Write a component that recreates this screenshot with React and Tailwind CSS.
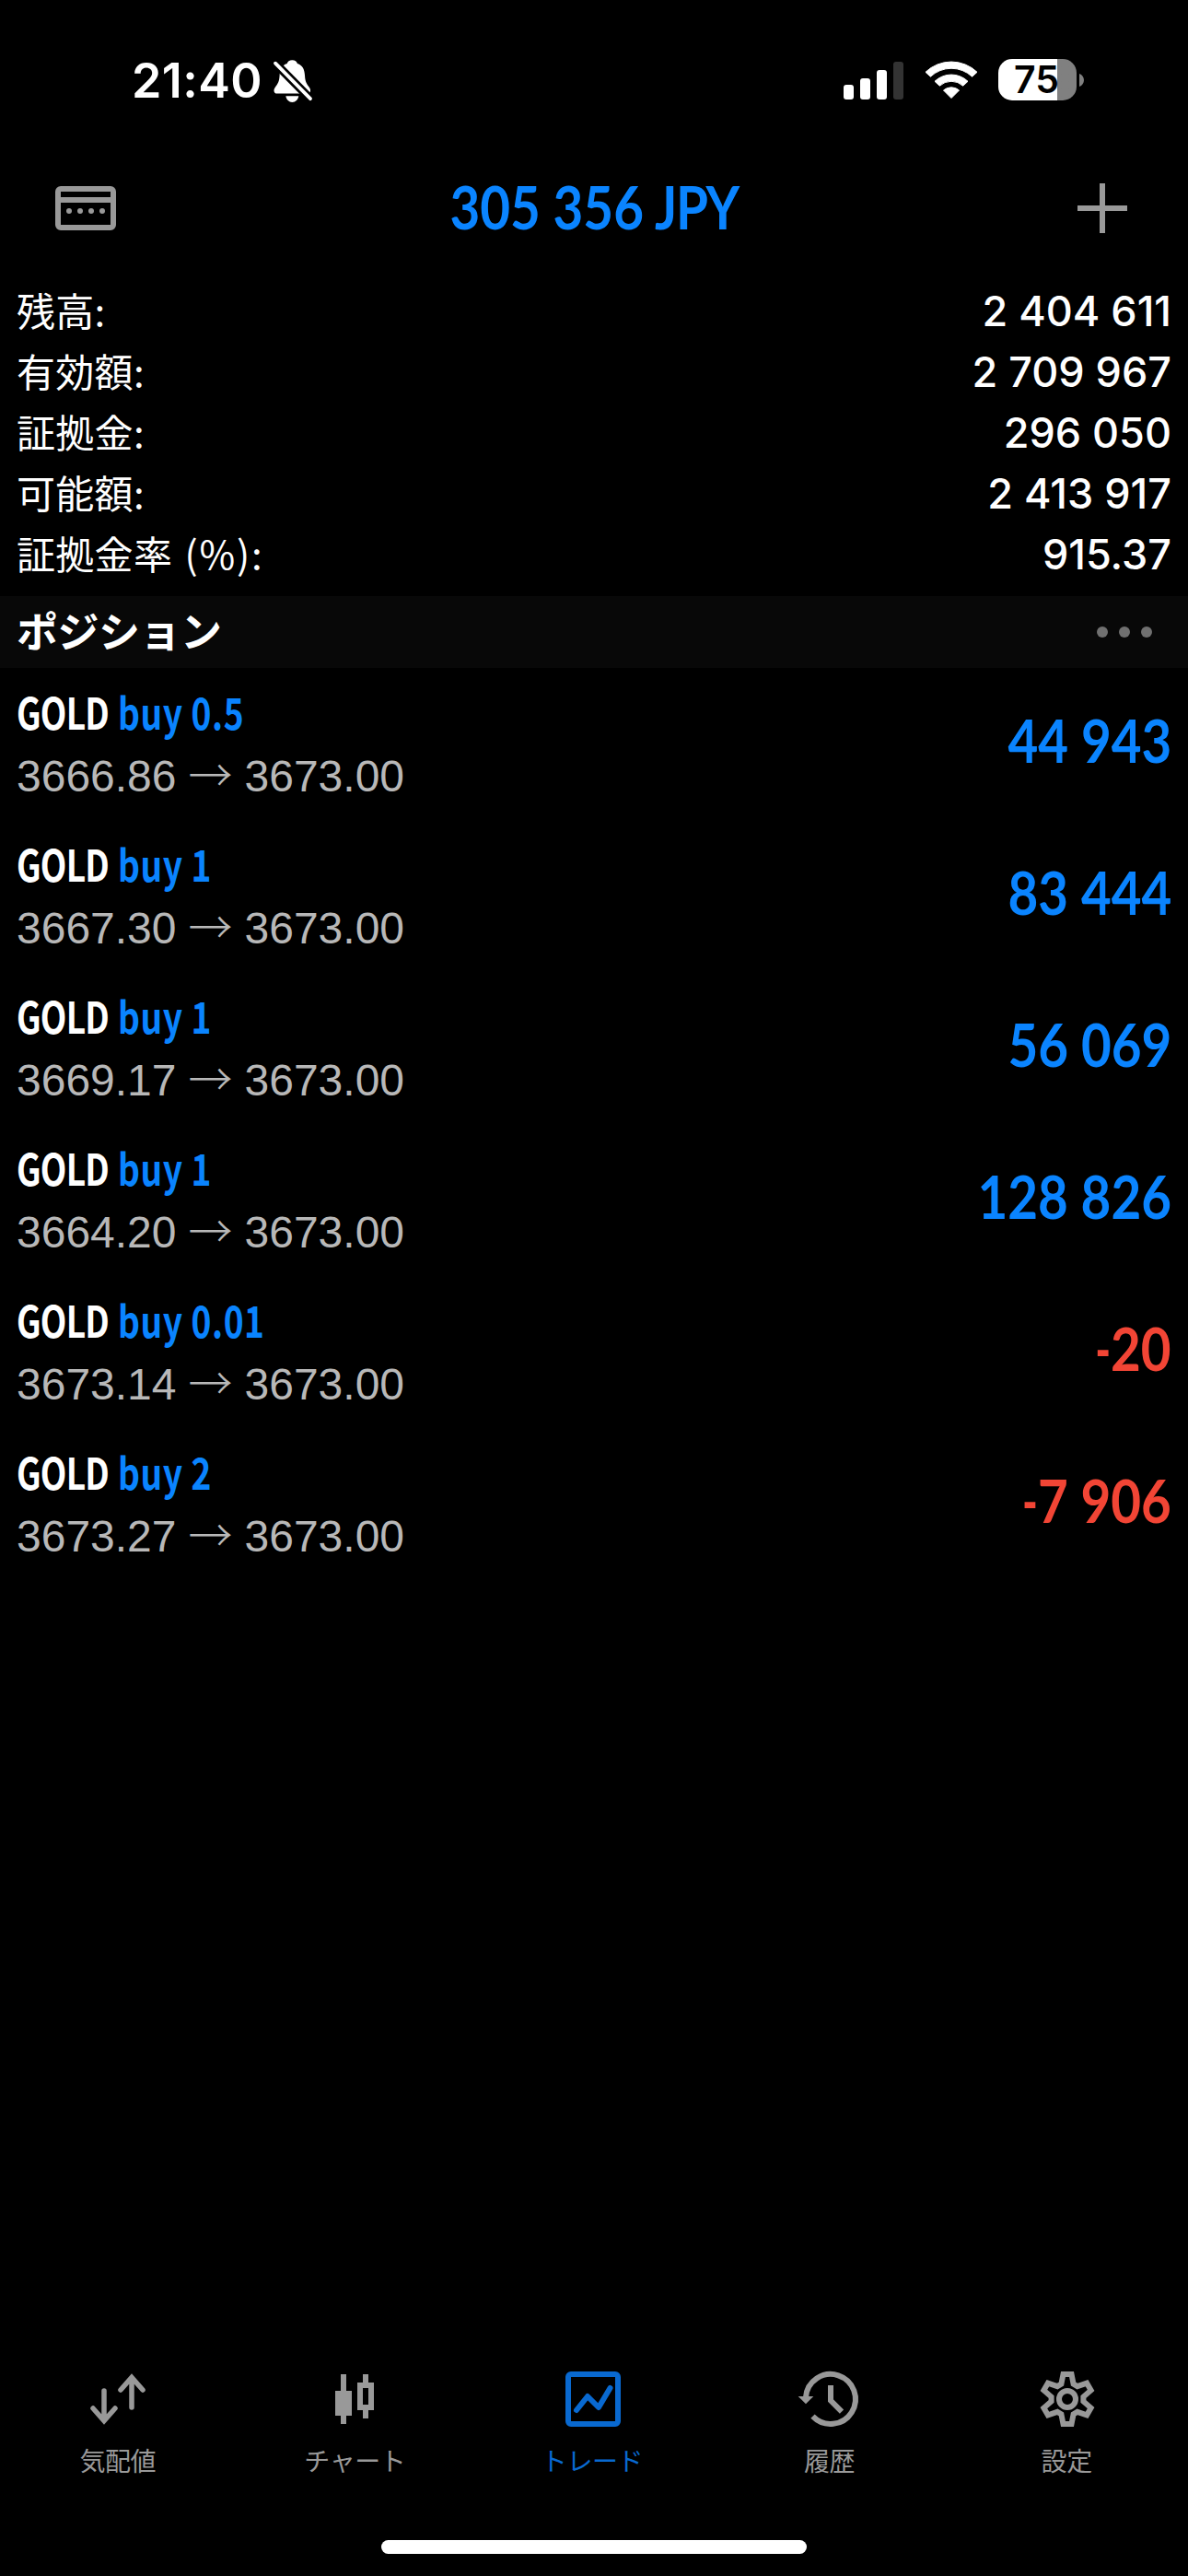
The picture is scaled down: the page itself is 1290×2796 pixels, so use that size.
import React from 'react';
import clsx from 'clsx';

const summary = [
  { label: '残高:', value: '2 404 611' },
  { label: '有効額:', value: '2 709 967' },
  { label: '証拠金:', value: '296 050' },
  { label: '可能額:', value: '2 413 917' },
  { label: '証拠金率', suffix: ' (%):', value: '915.37' },
];

const positions = [
  { id: 1, volume: '0.5', open: '3666.86', current: '3673.00', profit: '44 943' },
  { id: 2, volume: '1', open: '3667.30', current: '3673.00', profit: '83 444' },
  { id: 3, volume: '1', open: '3669.17', current: '3673.00', profit: '56 069' },
  { id: 4, volume: '1', open: '3664.20', current: '3673.00', profit: '128 826' },
  { id: 5, volume: '0.01', open: '3673.14', current: '3673.00', profit: '-20' },
  { id: 6, volume: '2', open: '3673.27', current: '3673.00', profit: '-7 906' },
];

const BellOffIcon = () => (
  <svg className="ml-[11px] h-[48px] w-[44px]" viewBox="0 0 44 48" fill="none">
    <path
      d="M21.300 1.300c-3 0-5 1.600-5.600 3.700C9.800 6.900 7.900 11.800 7.600 17.800 7.300 24.300 5.800 26.800 2.800 30.800 0.500 33.900 1.300 37.600 4.800 37.600H37.800C41.300 37.600 42.100 33.900 39.800 30.800 36.800 26.800 35.300 24.300 35 17.800 34.700 11.800 32.800 6.900 26.900 5 26.300 2.900 24.300 1.300 21.300 1.300Z"
      fill="white"
    />
    <path d="M14.300 40.300H28.300C27.800 44 24.800 47 21.300 47S14.800 44 14.300 40.300Z" fill="white" />
    <path d="M-1 0.600L44 46.200" stroke="black" strokeWidth="9.200" />
    <path d="M3 4.700L41 43.200" stroke="white" strokeWidth="3.800" strokeLinecap="round" />
  </svg>
);

const SignalIcon = () => (
  <svg className="h-[42px] w-[66px]" viewBox="0 0 66 42">
    <rect x="0" y="26" width="11" height="16" rx="3" fill="white" />
    <rect x="18" y="19" width="11" height="23" rx="3" fill="white" />
    <rect x="36" y="10" width="11" height="32" rx="3" fill="white" />
    <rect x="54" y="1" width="11" height="41" rx="3" fill="#333333" />
  </svg>
);

const WifiIcon = () => (
  <svg className="ml-[22px] h-[43px] w-[58px]" viewBox="0 0 58 43">
    <g fill="white" stroke="white" strokeWidth="1" strokeLinejoin="round">
      <path d="M1 13.300A40.500 40.500 0 0 1 57 13.300L51.600 18.200A33 33 0 0 0 6.400 18.200Z" />
      <path d="M11 23.300A26 26 0 0 1 47 23.300L41.700 28.200A18.800 18.800 0 0 0 16.300 28.200Z" />
      <path d="M20.500 33A13 13 0 0 1 37.500 33L29 41.500Z" />
    </g>
  </svg>
);

const Battery = () => (
  <div className="ml-[22px] flex items-center">
    <div className="flex h-[45px] w-[85px] items-center justify-center rounded-[15px] bg-linear-to-r from-white from-[75.300%] to-[#808080] to-[75.300%]">
      <span className="mr-0.5 text-[41px] leading-[45px] font-semibold text-black">75</span>
    </div>
    <svg className="ml-[3px] h-[14px] w-[5px]" viewBox="0 0 5 14">
      <path d="M0 0C3 1 5 4 5 7S3 13 0 14Z" fill="#808080" />
    </svg>
  </div>
);

const CardIcon = () => (
  <svg className="h-[48px] w-[66px]" viewBox="0 0 66 48" fill="none" stroke="#999999" strokeWidth="6">
    <rect x="3" y="3" width="60" height="42" rx="3" />
    <path d="M3 15H63" />
    <g fill="#999999" stroke="none">
      <circle cx="15" cy="27" r="3" />
      <circle cx="27" cy="27" r="3" />
      <circle cx="39" cy="27" r="3" />
      <circle cx="51" cy="27" r="3" />
    </g>
  </svg>
);

const PlusIcon = () => (
  <svg className="h-[54px] w-[54px]" viewBox="0 0 54 54" stroke="#999999" strokeWidth="6">
    <path d="M27 0V54M0 27H54" />
  </svg>
);

const MoreIcon = () => (
  <svg className="h-3 w-[60px]" viewBox="0 0 60 12" fill="#707070">
    <circle cx="6" cy="6" r="6" />
    <circle cx="30" cy="6" r="6" />
    <circle cx="54" cy="6" r="6" />
  </svg>
);

// Tab icons share a 72px box centred on the origin
const TabIcon = ({ children }) => (
  <svg
    className="h-[72px] w-[72px]"
    viewBox="-36 -36 72 72"
    fill="none"
    stroke="currentColor"
    strokeWidth="6"
  >
    {children}
  </svg>
);

const tabs = [
  {
    label: '気配値',
    icon: (
      <g strokeWidth="5.500" strokeLinecap="round">
        <path d="M-16 -9V22M-28 10L-16 23.500L-4 10" />
        <path d="M14 9V-22M2 -10L14 -23.500L26 -10" />
      </g>
    ),
  },
  {
    label: 'チャート',
    icon: (
      <g fill="currentColor" stroke="none">
        <path d="M-16 -27H-10V27H-16Z" />
        <path d="M-22 -9H-4V18H-22Z" />
        <path d="M8 -27H14V-18H20V12H14V21H8V12H2V-18H8ZM8 -12V6H14V-12Z" fillRule="evenodd" />
      </g>
    ),
  },
  {
    label: 'トレード',
    active: true,
    icon: (
      <>
        <rect x="-27" y="-27" width="54" height="54" rx="3" />
        <path d="M-18 12L-6 -3L6 9L18.500 -12" strokeLinecap="round" strokeLinejoin="round" />
      </>
    ),
  },
  {
    label: '履歴',
    icon: (
      <>
        <path d="M-27 -2A27 27 0 1 1 -19.500 18.700" />
        <path d="M-35.300 -3H-18.700L-27 5.300Z" fill="currentColor" stroke="none" />
        <path d="M0 -15V1.500L12 13.700" />
      </>
    ),
  },
  {
    label: '設定',
    icon: (
      <>
        <path d="M-4.500 -27H4.500L6.600 -16.300L10.800 -13.900L21.100 -17.400L25.600 -9.600L17.400 -2.450V2.450L25.600 9.600L21.100 17.400L10.800 13.900L6.600 16.300L4.500 27H-4.500L-6.600 16.300L-10.800 13.900L-21.100 17.400L-25.600 9.600L-17.400 2.450V-2.450L-25.600 -9.600L-21.100 -17.400L-10.800 -13.900L-6.600 -16.300Z" />
        <circle r="9" />
      </>
    ),
  },
];

const StatusBar = () => (
  <div className="flex h-[174px] items-start justify-between pr-[113px] pl-[143px] font-['Inter',sans-serif]">
    <div className="flex h-[176px] items-center">
      <span className="text-[52px] leading-none font-semibold tracking-[0.4px] text-white">21:40</span>
      <BellOffIcon />
    </div>
    <div className="flex h-[173px] items-center">
      <SignalIcon />
      <WifiIcon />
      <Battery />
    </div>
  </div>
);

const Header = ({ total, currency }) => (
  <header className="flex h-[104px] items-center justify-between pr-[66px] pl-[60px]">
    <CardIcon />
    <h1 className="mr-[6px] scale-x-[0.87] pb-1 font-['Lato',sans-serif] text-[65px] leading-none font-bold whitespace-nowrap text-[#0a84ff]">
      {total} <span className="-ml-0.5 tracking-[-1.500px]">{currency}</span>
    </h1>
    <PlusIcon />
  </header>
);

const SummaryRow = ({ label, suffix, value }) => (
  <div className="flex h-[66px] items-center justify-between text-white">
    <span className="pb-1 text-[42px] leading-[66px] tracking-[0.3px]">
      {label}
      {suffix && <span className="ml-0.5 tracking-[1.800px] whitespace-pre">{suffix}</span>}
    </span>
    <span className="font-['Inter',sans-serif] text-[45px] leading-[66px] font-[450]">{value}</span>
  </div>
);

const PositionRow = ({ position }) => {
  const isLoss = position.profit.startsWith('-');

  return (
    <li className="flex h-[165px] justify-between px-[18px]">
      <div className="pt-3.5">
        <div className="h-[70px] origin-left scale-x-[0.79] text-[47px] leading-[66px] font-bold whitespace-nowrap text-white">
          <span className="tracking-[-1px]">GOLD</span>{' '}
          <span className="ml-0.5 tracking-[0.7px] text-[#0a84ff]">buy {position.volume}</span>
        </div>
        <div className="flex h-[68px] gap-[13px] font-['Liberation_Sans',sans-serif] text-[48px] leading-[68px] text-[#b8b8b8]">
          <span>{position.open}</span>
          <span className="-mt-[5px] font-['Noto_Sans_CJK_JP',sans-serif] font-light">→</span>
          <span>{position.current}</span>
        </div>
      </div>
      <div
        className={clsx(
          "flex origin-right scale-x-[0.87] items-center pb-[9px] font-['Lato',sans-serif] text-[65px] leading-none font-bold",
          isLoss ? 'text-[#f24535]' : 'text-[#0a84ff]'
        )}
      >
        {isLoss && <span className="origin-right scale-x-[0.8]">-</span>}
        {position.profit.replace('-', '')}
      </div>
    </li>
  );
};

const App = () => (
  <div className="flex h-[2796px] w-[1290px] flex-col overflow-hidden bg-black font-['Noto_Sans_CJK_JP',sans-serif]">
    <StatusBar />
    <Header total="305 356" currency="JPY" />

    {/* Account summary */}
    <section className="h-[369px] px-[18px] pt-[27px]">
      {summary.map((row) => (
        <SummaryRow key={row.label} {...row} />
      ))}
    </section>

    {/* Open positions */}
    <div className="flex h-[78px] items-center justify-between bg-[#080808] pr-[39px] pl-[18px]">
      <h2 className="pb-[5px] text-[45px] leading-none font-bold tracking-[-0.5px] text-white">ポジション</h2>
      <MoreIcon />
    </div>
    <ul className="flex-1">
      {positions.map((position) => (
        <PositionRow key={position.id} position={position} />
      ))}
    </ul>

    {/* Tab bar */}
    <nav className="mr-0.5 grid h-[189px] grid-cols-5">
      {tabs.map((tab) => (
        <div
          key={tab.label}
          className={clsx(
            'flex flex-col items-center',
            tab.active ? 'text-[#0969d0]' : 'text-[#999999]'
          )}
        >
          <TabIcon>{tab.icon}</TabIcon>
          <span className="mt-2.5 mr-0.5 text-[28px] leading-[40px] tracking-[-0.4px]">{tab.label}</span>
        </div>
      ))}
    </nav>
    <div className="mx-auto mb-6 h-[15px] w-[462px] rounded-full bg-white" />
  </div>
);

export default App;
